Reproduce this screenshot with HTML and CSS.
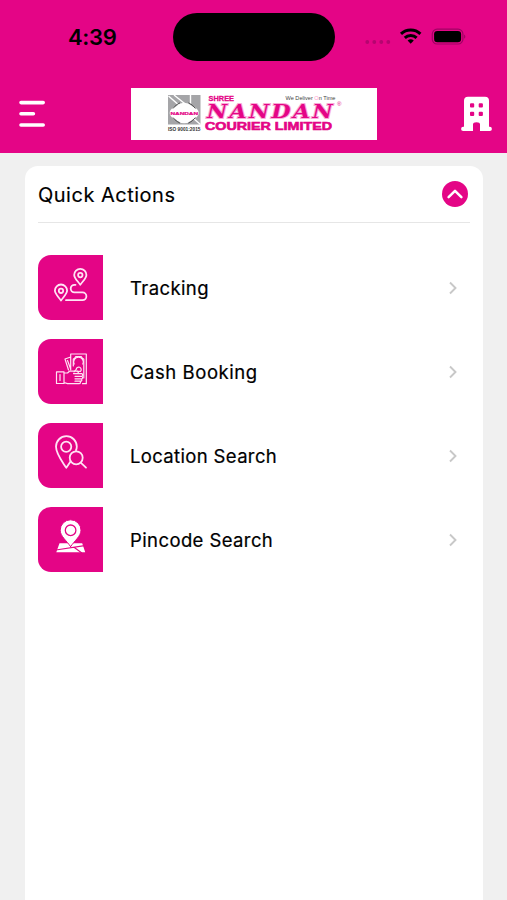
FILE: index.html
```html
<!DOCTYPE html>
<html lang="en">
<head>
<meta charset="utf-8">
<title>Shree Nandan Courier Limited</title>
<link rel="stylesheet" href="styles.css">
</head>
<body>
<header class="header">
  <div class="status">
    <span class="time">4:39</span>
    <span class="island"></span>
    <svg class="indicators" width="103" height="20" viewBox="0 0 103 20">
      <g fill="#b50570"><circle cx="3.3" cy="15" r="1.9"/><circle cx="10.3" cy="15" r="1.9"/><circle cx="17.3" cy="15" r="1.9"/><circle cx="24.3" cy="15" r="1.9"/></g>
      <g fill="none" stroke="#000" stroke-width="3"><path d="M37 6.9C42.4 1.8 51 1.8 56.4 6.9"/><path d="M40.8 10.9C44 7.8 49.5 7.8 52.6 10.9"/></g>
      <path d="M43.6 13.5Q46.7 11 49.8 13.5L46.7 16.8Z" fill="#000"/>
      <rect x="68.3" y="2.2" width="30.6" height="14.8" rx="4.8" fill="none" stroke="#a00364" stroke-width="1.2"/>
      <rect x="70.1" y="4" width="27" height="11.2" rx="3.3"/>
      <path d="M100.3 7.4Q102.3 9.5 100.3 11.7Z" fill="#8d0358"/>
    </svg>
  </div>
  <div class="bar">
    <svg class="menu" width="28" height="28" viewBox="0 0 28 28" fill="none" stroke="#fff" stroke-width="3.6" stroke-linecap="round"><path d="M3 2.6H25.2M3 13.8H15.4M3 25H25.2"/></svg>
    <svg class="logo" width="246" height="52" viewBox="0 0 246 52">
      <rect width="246" height="52" fill="#fff"/>
      <rect x="37" y="7" width="32.5" height="29.5" fill="#a5a5a8"/>
      <path d="M37.5 8L50 19M43 7L58 19M59.5 7V16M62 30L69.5 36.5" fill="none" stroke="#fff" stroke-width="1.4"/>
      <ellipse cx="53.2" cy="25" rx="14.5" ry="8" fill="#fff"/>
      <circle cx="53.2" cy="25" r="10.3" fill="#fff"/>
      <path d="M42 20.5Q45 16.3 49 14.8M57.4 14.8Q61.4 16.3 64.4 20.5M42 29.5Q45 33.7 49 35.2M57.4 35.2Q61.4 33.7 64.4 29.5" fill="none" stroke="#555" stroke-width="1"/>
      <text class="emblem" x="39.5" y="26.5" textLength="27.5" lengthAdjust="spacingAndGlyphs">NANDAN</text>
      <text class="iso" x="37" y="42.8" textLength="32.5" lengthAdjust="spacingAndGlyphs">ISO 9001:2015</text>
      <text class="shree" x="77.5" y="13" textLength="25.5" lengthAdjust="spacingAndGlyphs">SHREE</text>
      <text class="tag" x="154.5" y="11.8" textLength="50" lengthAdjust="spacingAndGlyphs">We Deliver <tspan class="tag-o">O</tspan>n Time</text>
      <text class="nandan" x="76" y="30.3" textLength="128" lengthAdjust="spacingAndGlyphs">NANDAN</text>
      <text class="reg" x="206" y="17.8">®</text>
      <text class="courier" x="74" y="42.4" textLength="127" lengthAdjust="spacingAndGlyphs">COURIER LIMITED</text>
    </svg>
    <svg class="building" width="31" height="36" viewBox="0 0 31 36">
      <path fill="#fff" fill-rule="evenodd" d="M7 .8H24Q28 .8 28 4.8V30.8H28.8A2 2 0 0 1 28.8 35H19V28.5Q19 26.3 15.5 26.3T12 28.5V35H2.2A2 2 0 0 1 2.2 30.8H3V4.8Q3 .8 7 .8ZM10 7.2Q9 7.2 9 8.2V10.4Q9 11.4 10 11.4H12.2Q13.2 11.4 13.2 10.4V8.2Q13.2 7.2 12.2 7.2ZM18.7 7.2Q17.7 7.2 17.7 8.2V10.4Q17.7 11.4 18.7 11.4H20.9Q21.9 11.4 21.9 10.4V8.2Q21.9 7.2 20.9 7.2ZM10 15.8Q9 15.8 9 16.8V19Q9 20 10 20H12.2Q13.2 20 13.2 19V16.8Q13.2 15.8 12.2 15.8ZM18.7 15.8Q17.7 15.8 17.7 16.8V19Q17.7 20 18.7 20H20.9Q21.9 20 21.9 19V16.8Q21.9 15.8 20.9 15.8Z"/>
    </svg>
  </div>
</header>
<main class="card">
  <div class="card-head">
    <h1 class="title">Quick Actions</h1>
    <svg class="collapse" width="26" height="26" viewBox="0 0 26 26"><circle cx="13" cy="13" r="13" fill="#e40586"/><path d="M6.6 16.2L13 9.8L19.4 16.2" fill="none" stroke="#fff" stroke-width="2.5" stroke-linecap="round" stroke-linejoin="round"/></svg>
  </div>
  <ul class="actions">
    <li class="action">
      <svg class="tile" viewBox="0 0 65 65">
        <path d="M42.3 29.8C39.5 25.8 36.2 23.2 36.2 19.9A6.1 6.1 0 0 1 48.4 19.9C48.4 23.2 45.1 25.8 42.3 29.8ZM23 45.5C20.2 41.5 16.9 38.9 16.9 35.6A6.1 6.1 0 0 1 29.1 35.6C29.1 38.9 25.8 41.5 23 45.5Z"/>
        <circle cx="42.3" cy="20.1" r="2.2"/><circle cx="23" cy="35.8" r="2.2"/>
        <path d="M37.5 29.8H36.5A3.8 3.8 0 0 0 36.5 37.4H44.5A3.9 3.9 0 0 1 44.5 45.2H28"/>
      </svg>
      <span class="label label-tracking">Tracking</span>
      <svg class="chevron" viewBox="0 0 10 14"><path d="M2 1.5L7.5 7L2 12.5"/></svg>
    </li>
    <li class="action">
      <svg class="tile tile-cash" viewBox="0 0 65 65">
        <path d="M32.7 31V15H48.3V44.7H44.5M32.7 18L27 20L30.5 31M29.5 21.5L32.7 30M35.3 27V20A3.5 3.5 0 0 0 37.8 17.5H43.2A3.5 3.5 0 0 0 45.8 20V39"/>
        <path d="M36.2 25A4.8 4.8 0 1 1 44.8 25M39 32.3H42.5A2.5 2.5 0 1 0 38.2 30.5L36 32.8"/>
        <path d="M18.5 32.8H26V44.5H18.5ZM22 35.5V41.5M26 34H29.5L31.5 32.2H39.5Q41.2 33.4 39.5 34.6H35.5M38 34.7H44Q45.6 36 44 37.3H37M44 37.3Q45.3 38.7 44 39.8H37M43.5 39.8Q44.5 41 43.2 42.2H37M42 42.2Q43.2 44.6 41 44.6H29.5L26 43.5"/>
      </svg>
      <span class="label label-cash">Cash Booking</span>
      <svg class="chevron" viewBox="0 0 10 14"><path d="M2 1.5L7.5 7L2 12.5"/></svg>
    </li>
    <li class="action">
      <svg class="tile" viewBox="0 0 65 65">
        <path d="M38 27.2Q38.8 25.5 38.8 23.6A10.4 10.4 0 0 0 18 23.6C18 31 23.5 37.5 28.3 44.8L32.7 38.2"/>
        <circle cx="28.2" cy="23.8" r="5.1"/><circle cx="38.2" cy="34.8" r="6.5"/><path d="M43 39.8L48 44.6"/>
      </svg>
      <span class="label label-location">Location Search</span>
      <svg class="chevron" viewBox="0 0 10 14"><path d="M2 1.5L7.5 7L2 12.5"/></svg>
    </li>
    <li class="action">
      <svg class="tile" viewBox="0 0 65 65">
        <path class="solid" d="M21.5 36.2H44.2L47.2 45.2H18.3Z"/>
        <path class="cut" d="M19.5 42.8L46.5 38.6M36 40.3L43.5 45.8"/>
        <path class="pin" d="M32.6 39.6C28.4 33.5 22.2 29 22.2 23.2A10.4 10.4 0 0 1 43 23.2C43 29 36.8 33.5 32.6 39.6Z"/>
        <circle class="ring" cx="32.6" cy="23.3" r="5.3"/>
      </svg>
      <span class="label label-pincode">Pincode Search</span>
      <svg class="chevron" viewBox="0 0 10 14"><path d="M2 1.5L7.5 7L2 12.5"/></svg>
    </li>
  </ul>
</main>
</body>
</html>
```
FILE: styles.css
```css
* { box-sizing: border-box; }
html, body { height: 100%; }
body {
  margin: 0;
  display: flex;
  flex-direction: column;
  overflow: hidden;
  background: #f0f0f0;
  color: #111;
  font-family: Inter, "Liberation Sans", sans-serif;
}
svg { display: block; flex: none; }
.header { height: 153px; flex: none; background: #e40586; }
.status {
  height: 88px;
  padding: 13px 40px 0 68px;
  display: flex;
  align-items: flex-start;
}
.time {
  width: 105px;
  padding-top: 10px;
  font-size: 22px;
  line-height: 28px;
  font-weight: 600;
  letter-spacing: -0.3px;
  color: #000;
}
.island { width: 162px; height: 48px; border-radius: 24px; background: #000; }
.indicators { margin: 14px 0 0 29px; }
.bar {
  display: flex;
  justify-content: space-between;
  align-items: flex-start;
  padding: 0 15px 0 18px;
}
.menu { margin-top: 12px; }
.logo { margin-left: 69px; margin-right: 69px; }
.building { margin-top: 8px; }
.logo text { font-family: "Liberation Sans", sans-serif; fill: #e40586; }
.logo .emblem { font-size: 4px; font-weight: 700; stroke: #e40586; stroke-width: .2px; }
.logo .iso { font-size: 5px; font-weight: 700; fill: #333; }
.logo .shree { font-size: 7.2px; font-weight: 700; stroke: #e40586; stroke-width: .3px; }
.logo .tag { font-size: 5.6px; fill: #444; }
.logo .tag-o { fill: #ff9dd2; }
.logo .nandan {
  font: italic 700 18.5px "DejaVu Serif", serif;
  letter-spacing: 2px;
  stroke: #f9a9d6;
  stroke-width: 1.8px;
  paint-order: stroke;
}
.logo .reg { font-size: 6px; }
.logo .courier { font-size: 11px; font-weight: 700; stroke: #e40586; stroke-width: .6px; }
.card {
  flex: 1;
  margin: 13px 24px 0 25px;
  padding: 0 13px;
  border-radius: 13px 13px 0 0;
  background: #fff;
}
.card-head {
  height: 57px;
  display: flex;
  align-items: center;
  justify-content: space-between;
  padding-right: 2px;
  border-bottom: 1px solid #e6e6e6;
}
.title { margin: 1px 0 0; font-size: 20px; font-weight: 400; line-height: 26px; letter-spacing: .5px; color: #000; -webkit-text-stroke: .15px #000; }
.actions {
  list-style: none;
  margin: 32.4px 0 0;
  padding: 0;
  display: grid;
  gap: 18.9px;
}
.action { height: 65px; display: flex; align-items: center; }
.tile {
  width: 65px;
  height: 65px;
  margin-right: 27px;
  border-radius: 13px 0 0 13px;
  background: #e40586;
  fill: none;
  stroke: #ffe3f4;
  stroke-width: 1.8;
  stroke-linecap: round;
  stroke-linejoin: round;
}
.tile-cash { stroke-width: 1.2; }
.solid { fill: #fff; stroke: none; }
.cut { stroke: #e40586; stroke-width: 1.1; }
.pin { fill: #fff; stroke: #e40586; stroke-width: 1; }
.ring { stroke: #e40586; stroke-width: 1.3; }
.label { flex: 1; font-size: 18.5px; font-weight: 400; line-height: 24px; color: #000; -webkit-text-stroke: .2px #000; }
.label-tracking { letter-spacing: .4px; }
.label-cash { letter-spacing: .56px; }
.label-location { letter-spacing: .35px; }
.label-pincode { letter-spacing: .4px; }
.chevron {
  width: 10px;
  height: 14px;
  margin-right: 12px;
  fill: none;
  stroke: #c8c8c8;
  stroke-width: 1.9;
}
```
